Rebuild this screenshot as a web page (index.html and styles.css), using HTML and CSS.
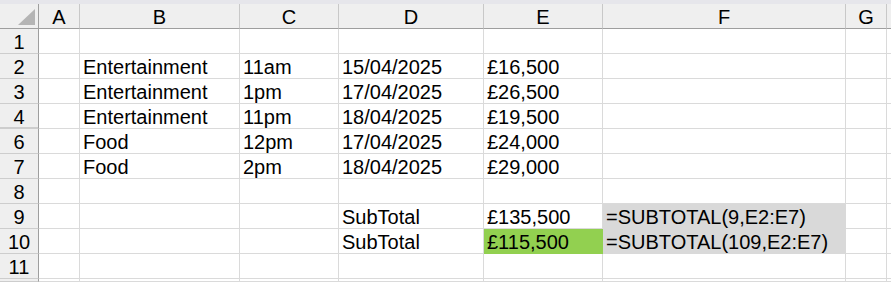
FILE: index.html
```html
<!DOCTYPE html>
<html>
<head>
<meta charset="utf-8">
<link rel="stylesheet" href="styles.css">
</head>
<body>
<div class="sheet">
  <div class="band"></div>

  <div class="ch corner"><span class="tri"></span></div>
  <div class="ch">A</div><div class="ch">B</div><div class="ch">C</div><div class="ch">D</div><div class="ch">E</div><div class="ch">F</div><div class="ch">G</div><div class="ch end"></div>

  <div class="rh">1</div><div class="c"></div><div class="c"></div><div class="c"></div><div class="c"></div><div class="c"></div><div class="c"></div><div class="c"></div><div class="c end"></div>

  <div class="rh">2</div><div class="c"></div><div class="c">Entertainment</div><div class="c">11am</div><div class="c">15/04/2025</div><div class="c">£16,500</div><div class="c"></div><div class="c"></div><div class="c end"></div>

  <div class="rh">3</div><div class="c"></div><div class="c">Entertainment</div><div class="c">1pm</div><div class="c">17/04/2025</div><div class="c">£26,500</div><div class="c"></div><div class="c"></div><div class="c end"></div>

  <div class="rh hid">4</div><div class="c"></div><div class="c">Entertainment</div><div class="c">11pm</div><div class="c">18/04/2025</div><div class="c">£19,500</div><div class="c"></div><div class="c"></div><div class="c end"></div>

  <div class="rh">6</div><div class="c"></div><div class="c">Food</div><div class="c">12pm</div><div class="c">17/04/2025</div><div class="c">£24,000</div><div class="c"></div><div class="c"></div><div class="c end"></div>

  <div class="rh">7</div><div class="c"></div><div class="c">Food</div><div class="c">2pm</div><div class="c">18/04/2025</div><div class="c">£29,000</div><div class="c"></div><div class="c"></div><div class="c end"></div>

  <div class="rh">8</div><div class="c"></div><div class="c"></div><div class="c"></div><div class="c"></div><div class="c"></div><div class="c"></div><div class="c"></div><div class="c end"></div>

  <div class="rh">9</div><div class="c"></div><div class="c"></div><div class="c"></div><div class="c">SubTotal</div><div class="c">£135,500</div><div class="c gray">=SUBTOTAL(9,E2:E7)</div><div class="c"></div><div class="c end"></div>

  <div class="rh">10</div><div class="c"></div><div class="c"></div><div class="c"></div><div class="c">SubTotal</div><div class="c green">£115,500</div><div class="c gray">=SUBTOTAL(109,E2:E7)</div><div class="c"></div><div class="c end"></div>

  <div class="rh">11</div><div class="c"></div><div class="c"></div><div class="c"></div><div class="c"></div><div class="c"></div><div class="c"></div><div class="c"></div><div class="c end"></div>

  <div class="rh"></div><div class="c"></div><div class="c"></div><div class="c"></div><div class="c"></div><div class="c"></div><div class="c"></div><div class="c"></div><div class="c end"></div>
</div>
</body>
</html>
```
FILE: styles.css
```css
html, body {
  margin: 0;
  padding: 0;
  background: #ffffff;
}
body {
  width: 891px;
  height: 282px;
  overflow: hidden;
  font-family: "Liberation Sans", Arial, sans-serif;
  font-size: 20px;
  color: #000000;
}
.sheet {
  display: grid;
  grid-template-columns: 39px 41px 160px 99px 145px 119px 243px 41px 4px;
  grid-template-rows: 4px 25px repeat(10, 25px) 3px;
}
.band {
  grid-column: 1 / -1;
  background: #e6e6eb;
}
.ch, .rh, .c {
  box-sizing: border-box;
  white-space: nowrap;
  line-height: 24px;
  padding-top: 1px;
  overflow: visible;
}
.ch {
  background: #efefef;
  border-right: 1px solid #c8c8c8;
  border-bottom: 1px solid #9e9e9e;
  text-align: center;
}
.ch.end { border-right: none; }
.corner {
  position: relative;
  border-right: 1px solid #9e9e9e;
}
.tri {
  position: absolute;
  right: 3px;
  bottom: 3px;
  width: 0;
  height: 0;
  border-left: 17px solid transparent;
  border-bottom: 16px solid #b4b4b4;
}
.rh {
  background: #efefef;
  border-right: 1px solid #9e9e9e;
  border-bottom: 1px solid #cdcdcd;
  text-align: center;
}
.rh.hid {
  box-shadow: inset 0 -1px 0 #cdcdcd;
}
.c {
  border-right: 1px solid #dadada;
  border-bottom: 1px solid #dadada;
  padding-left: 3px;
}
.c.end { border-right: none; }
.gray {
  background: #d9d9d9;
  border-right-color: #d9d9d9;
  border-bottom-color: #d9d9d9;
  padding-left: 3px;
}
.green {
  background: #92d050;
  border-right-color: #92d050;
  border-bottom-color: #92d050;
}
```
